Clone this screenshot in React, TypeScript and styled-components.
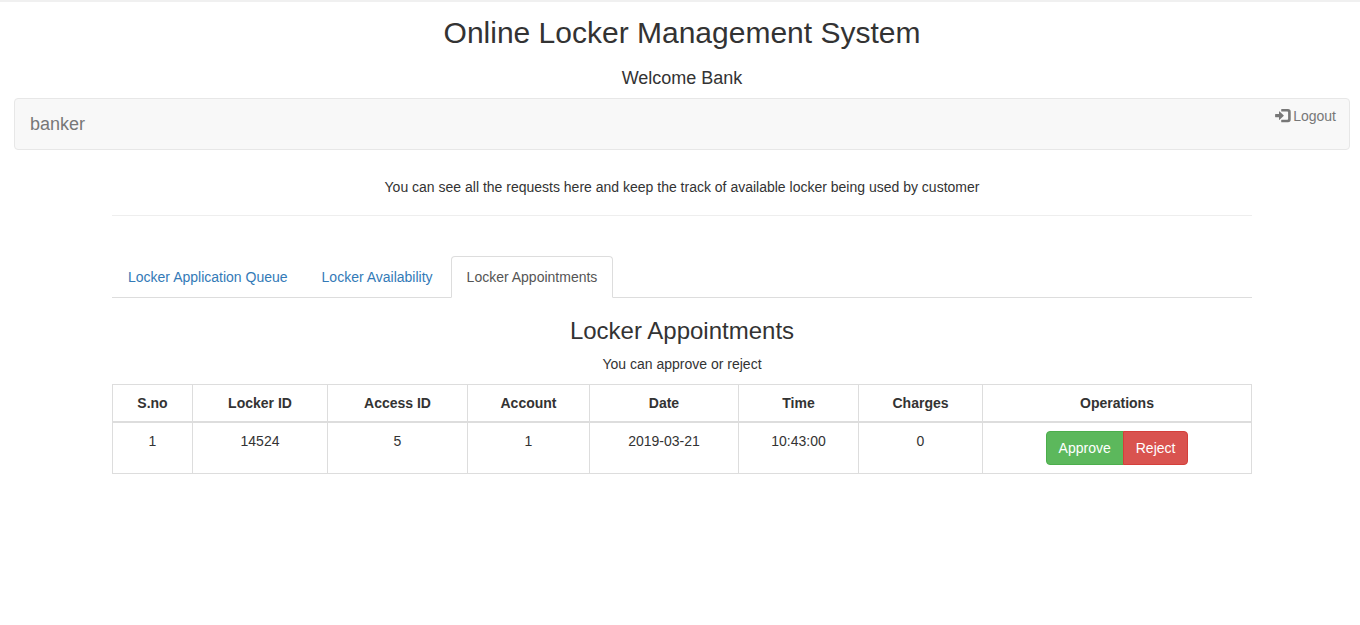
import React from "react";
import styled, { createGlobalStyle } from "styled-components";

const GlobalStyle = createGlobalStyle`
  *, *::before, *::after { box-sizing: border-box; }
  body {
    margin: 0;
    background: #fff;
    color: #333;
    font-family: "Liberation Sans", Arial, sans-serif;
    font-size: 14px;
    line-height: 20px;
  }
`;

const Page = styled.div`
  border-top: 2px solid #f0f0f0;
  padding: 14px 10px 20px 14px;
`;

const Title = styled.h1`
  margin: 0 0 18px;
  font-size: 30px;
  font-weight: 500;
  line-height: 34px;
  text-align: center;
`;

const Welcome = styled.h2`
  margin: 0 0 10px;
  font-size: 18px;
  font-weight: 500;
  line-height: 20px;
  text-align: center;
`;

const Navbar = styled.nav`
  display: flex;
  justify-content: space-between;
  min-height: 52px;
  margin-bottom: 20px;
  background: #f8f8f8;
  border: 1px solid #e7e7e7;
  border-radius: 4px;
`;

const Brand = styled.a`
  padding: 15px;
  color: #777;
  font-size: 18px;
  line-height: 20px;
  text-decoration: none;
`;

const LogoutLink = styled.a`
  display: flex;
  align-items: center;
  align-self: flex-start;
  gap: 2px;
  padding: 7px 13px;
  color: #777;
  text-decoration: none;
`;

const Container = styled.main`
  max-width: 1140px;
  margin: 0 auto;
`;

const Intro = styled.p`
  margin: 0;
  padding: 7px 0 18px;
  border-bottom: 1px solid #eee;
  text-align: center;
`;

const Tabs = styled.ul`
  display: flex;
  list-style: none;
  margin: 40px 0 20px;
  padding: 0;
  border-bottom: 1px solid #ddd;
`;

const TabItem = styled.li`
  margin-bottom: -1px;
`;

const TabLink = styled.a<{ $active?: boolean }>`
  display: block;
  margin-right: 2px;
  padding: 10px 15px;
  border: 1px solid ${(p) => (p.$active ? "#ddd" : "transparent")};
  border-bottom-color: ${(p) => (p.$active ? "#fff" : "transparent")};
  border-radius: 4px 4px 0 0;
  background: ${(p) => (p.$active ? "#fff" : "transparent")};
  color: ${(p) => (p.$active ? "#555" : "#337ab7")};
  text-decoration: none;
`;

const SectionTitle = styled.h3`
  margin: 0 0 10px;
  font-size: 24px;
  font-weight: 500;
  line-height: 26px;
  text-align: center;
`;

const Hint = styled.p`
  margin: 0 0 10px;
  text-align: center;
`;

const Table = styled.table`
  width: 100%;
  table-layout: fixed;
  border-collapse: collapse;
  text-align: center;
`;

const Col = styled.col<{ $width: number }>`
  width: ${(p) => p.$width}px;
`;

const Th = styled.th`
  padding: 8px;
  border: 1px solid #ddd;
  border-bottom-width: 2px;
`;

const Td = styled.td`
  padding: 8px;
  border: 1px solid #ddd;
  vertical-align: top;
`;

const ButtonGroup = styled.div`
  display: flex;
  justify-content: center;
`;

const Button = styled.button<{ $kind: "success" | "danger" }>`
  padding: 6px 12px;
  border: 1px solid ${(p) => (p.$kind === "success" ? "#4cae4c" : "#d43f3a")};
  border-radius: 4px;
  background: ${(p) => (p.$kind === "success" ? "#5cb85c" : "#d9534f")};
  color: #fff;
  font: inherit;
  cursor: pointer;

  &:first-child:not(:last-child) {
    border-top-right-radius: 0;
    border-bottom-right-radius: 0;
  }
  & + & {
    margin-left: -1px;
    border-top-left-radius: 0;
    border-bottom-left-radius: 0;
  }
`;

const LogInIcon = () => (
  <svg width="16" height="14" viewBox="0 0 16 14" fill="currentColor" aria-hidden="true">
    <path d="M0.5 5H4V2.8Q4 2 4.6 2.5L8.6 6.2Q9 6.6 8.6 7L4.6 10.7Q4 11.2 4 10.4V8.2H0.5Q0.1 8.2 0.1 7.8V5.4Q0.1 5 0.5 5Z" />
    <path d="M6.7 0H13Q15.7 0 15.7 2.7V10.6Q15.7 13.3 13 13.3H6.7Q6.2 13.3 6.2 12.8V11.3Q6.2 10.8 6.7 10.8H12.3Q13.1 10.8 13.1 10V3.3Q13.1 2.5 12.3 2.5H6.7Q6.2 2.5 6.2 2V0.5Q6.2 0 6.7 0Z" />
  </svg>
);

const tabs = ["Locker Application Queue", "Locker Availability", "Locker Appointments"];
const activeTab = "Locker Appointments";

const columns = [
  { label: "S.no", width: 80 },
  { label: "Locker ID", width: 135 },
  { label: "Access ID", width: 140 },
  { label: "Account", width: 122 },
  { label: "Date", width: 149 },
  { label: "Time", width: 120 },
  { label: "Charges", width: 124 },
  { label: "Operations", width: 269 },
];

const appointments = [["1", "14524", "5", "1", "2019-03-21", "10:43:00", "0"]];

export default function App() {
  return (
    <>
      <GlobalStyle />
      <Page>
        <Title>Online Locker Management System</Title>
        <Welcome>Welcome Bank</Welcome>
        <Navbar>
          <Brand href="#">banker</Brand>
          <LogoutLink href="#">
            <LogInIcon />
            Logout
          </LogoutLink>
        </Navbar>
        <Container>
          <Intro>
            You can see all the requests here and keep the track of available locker being used by customer
          </Intro>
          <Tabs>
            {tabs.map((tab) => (
              <TabItem key={tab}>
                <TabLink href="#" $active={tab === activeTab} aria-current={tab === activeTab ? "page" : undefined}>
                  {tab}
                </TabLink>
              </TabItem>
            ))}
          </Tabs>
          <SectionTitle>Locker Appointments</SectionTitle>
          <Hint>You can approve or reject</Hint>
          <Table>
            <colgroup>
              {columns.map((c) => (
                <Col key={c.label} $width={c.width} />
              ))}
            </colgroup>
            <thead>
              <tr>
                {columns.map((c) => (
                  <Th key={c.label} scope="col">{c.label}</Th>
                ))}
              </tr>
            </thead>
            <tbody>
              {appointments.map((row) => (
                <tr key={row[0]}>
                  {row.map((value, i) => (
                    <Td key={columns[i].label}>{value}</Td>
                  ))}
                  <Td>
                    <ButtonGroup>
                      <Button type="button" $kind="success">Approve</Button>
                      <Button type="button" $kind="danger">Reject</Button>
                    </ButtonGroup>
                  </Td>
                </tr>
              ))}
            </tbody>
          </Table>
        </Container>
      </Page>
    </>
  );
}
